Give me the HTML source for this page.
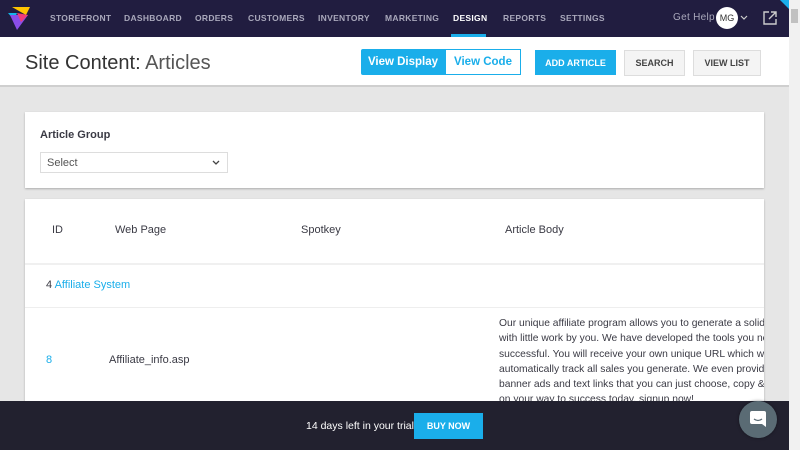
<!DOCTYPE html>
<html><head><meta charset="utf-8"><style>
*{box-sizing:border-box;margin:0;padding:0}
html,body{width:800px;height:450px;overflow:hidden}
body{background:#e6e6e6;font-family:"Liberation Sans",sans-serif;position:relative;color:#3a3a44}
.abs{position:absolute}
.nav{left:0;top:0;width:789px;height:37px;background:#211d40}
.nav span{position:absolute;top:13px;font-size:8.5px;font-weight:bold;color:#a9a8bb;letter-spacing:.3px}
.hdr{left:0;top:37px;width:789px;height:50px;background:#fff;border-bottom:2px solid #cfcfcf}
.btn{position:absolute;font-size:10px;font-weight:bold;display:flex;align-items:center;justify-content:center}
.card{background:#fff;left:25px;width:739px;box-shadow:0 1px 2px rgba(0,0,0,.25)}
.t{position:absolute;font-size:11px;color:#3a3a44}
.link{color:#1aaeea}
</style></head><body>
<div class="abs nav">
<svg class="abs" style="left:8px;top:7px" width="23" height="24" viewBox="0 0 23 24"><polygon points="4,0 22,0 18,8" fill="#ffc400"/><polygon points="0,6 9,6 6,13" fill="#14b5e8"/><polygon points="2,8 20,8 9,23" fill="#8a4de8"/><polygon points="9,6 20,8 13,15" fill="#f03c78"/></svg>
<span style="left:50px">STOREFRONT</span><span style="left:124px">DASHBOARD</span><span style="left:195px">ORDERS</span><span style="left:248px">CUSTOMERS</span><span style="left:318px">INVENTORY</span><span style="left:385px">MARKETING</span><span style="left:453px;color:#fff">DESIGN</span><span style="left:503px">REPORTS</span><span style="left:560px">SETTINGS</span>
<div class="abs" style="left:451px;top:34px;width:35px;height:3px;background:#1aaeea"></div>
<span style="left:673px;font-weight:normal;font-size:10px;top:12px">Get Help</span>
<div class="abs" style="left:716px;top:7px;width:22px;height:22px;border-radius:50%;background:#fff;color:#333;font-size:9px;display:flex;align-items:center;justify-content:center">MG</div>
<svg class="abs" style="left:740px;top:15px" width="8" height="6"><path d="M1 1 L4 4 L7 1" stroke="#ccc" fill="none" stroke-width="1.2"/></svg>
<svg class="abs" style="left:763px;top:11px" width="14" height="14"><path d="M6 1H1V13H13V8M8 1H13V6M13 1L6 8" stroke="#ccc" fill="none" stroke-width="1.4"/></svg>
<div class="abs" style="left:780px;top:0;width:0;height:0;border-left:9px solid transparent;border-top:9px solid #1aaeea"></div>
</div>
<div class="abs hdr">
<div class="abs" style="left:25px;top:15px;font-size:20px;color:#333"><span style="color:#333">Site Content:</span> <span style="color:#555">Articles</span></div>
<div class="btn" style="left:361px;top:12px;width:84px;height:26px;background:#1aaeea;color:#fff;font-size:11.5px;border-radius:2px 0 0 2px">View Display</div>
<div class="btn" style="left:445px;top:12px;width:76px;height:26px;border:1px solid #1aaeea;color:#1aaeea;font-size:11.5px;background:#fff">View Code</div>
<div class="btn" style="left:535px;top:13px;width:81px;height:25px;background:#1aaeea;color:#fff;font-size:9px">ADD ARTICLE</div>
<div class="btn" style="left:624px;top:13px;width:61px;height:26px;background:#f4f4f4;border:1px solid #ddd;color:#444;font-size:9px">SEARCH</div>
<div class="btn" style="left:693px;top:13px;width:68px;height:26px;background:#f4f4f4;border:1px solid #ddd;color:#444;font-size:9px">VIEW LIST</div>
</div>
<div class="abs card" style="top:112px;height:76px">
<div class="t" style="left:15px;top:17px;font-weight:bold">Article Group</div>
<div class="abs" style="left:15px;top:40px;width:188px;height:21px;border:1px solid #ddd"><div class="t" style="left:6px;top:4px;color:#555">Select</div>
<svg class="abs" style="left:171px;top:7px" width="8" height="6"><path d="M1 1L4 4L7 1" stroke="#444" fill="none" stroke-width="1.3"/></svg></div>
</div>
<div class="abs card" style="top:199px;height:251px">
<div class="t" style="left:27px;top:25px">ID</div>
<div class="t" style="left:90px;top:25px">Web Page</div>
<div class="t" style="left:276px;top:25px">Spotkey</div>
<div class="t" style="left:480px;top:25px">Article Body</div>
<div class="abs" style="left:0;top:64px;width:739px;height:2px;background:#f0f0f0"></div>
<div class="t" style="left:21px;top:80px">4 <span class="link">Affiliate System</span></div>
<div class="abs" style="left:0;top:108px;width:739px;height:1px;background:#eee"></div>
<div class="t link" style="left:21px;top:155px">8</div>
<div class="t" style="left:84px;top:155px">Affiliate_info.asp</div>
<div class="t" style="left:474px;top:117px;width:265px;white-space:nowrap;overflow:hidden;line-height:15.3px;font-size:10.3px">Our unique affiliate program allows you to generate a solid in<br>with little work by you. We have developed the tools you nee<br>successful. You will receive your own unique URL which will<br>automatically track all sales you generate. We even provide y<br>banner ads and text links that you can just choose, copy &amp; pa<br>on your way to success today, signup now!</div>
</div>
<div class="abs" style="left:0;top:401px;width:789px;height:49px;background:#22212f">
<div class="t" style="left:306px;top:19px;color:#fff;font-size:10.5px">14 days left in your trial</div>
<div class="btn" style="left:414px;top:12px;width:69px;height:26px;background:#1aaeea;color:#fff;font-size:9px">BUY NOW</div>
<div class="abs" style="left:739px;top:0;width:38px;height:37px;border-radius:50%;background:#5a6b74;box-shadow:0 0 3px rgba(0,0,0,.4)"><svg class="abs" style="left:10px;top:9px" width="18" height="19"><path d="M3 1H15Q17 1 17 3V17L13 14H3Q1 14 1 12V3Q1 1 3 1Z" fill="#fff"/><path d="M5 9Q9 12 13 9" stroke="#5a6b74" fill="none" stroke-width="1.3"/></svg></div>
</div>
<div class="abs" style="left:789px;top:0;width:11px;height:450px;background:#f1f1f1"><div class="abs" style="left:2px;top:9px;width:7px;height:14px;background:#c1c1c1"></div></div>
</body></html>
